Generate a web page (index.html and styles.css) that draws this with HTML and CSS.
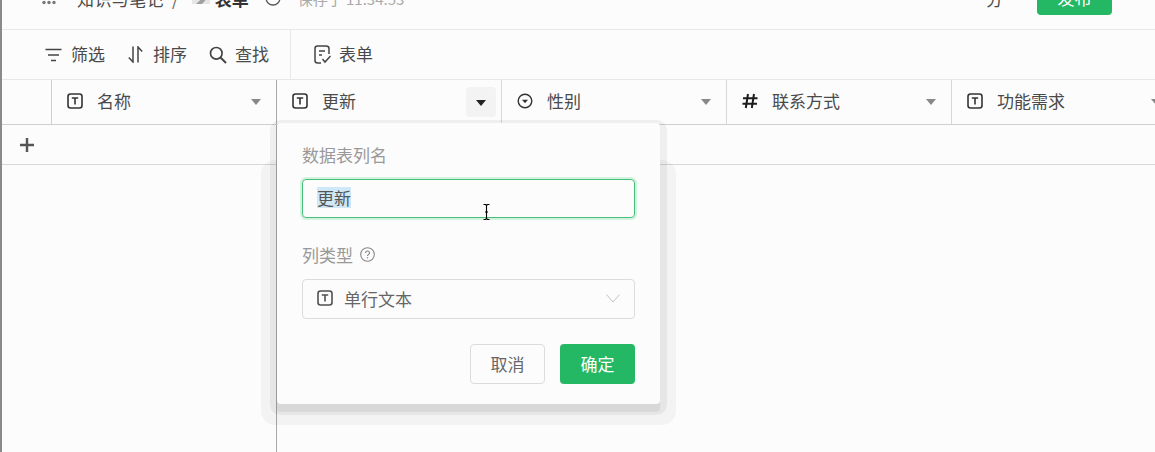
FILE: index.html
```html
<!DOCTYPE html>
<html lang="en">
<head>
    <meta charset="UTF-8">
    <meta name="viewport" content="width=device-width, initial-scale=1.0">
    <title>表单</title>
    <link rel="stylesheet" href="styles.css">
</head>
<body>
    <div class="page">
        <header class="topbar">
            <div class="topbar-row">
                <svg class="dots" width="14" height="5" viewBox="0 0 14 5"><circle cx="2" cy="2.500" r="1.700"/><circle cx="7" cy="2.500" r="1.700"/><circle cx="12" cy="2.500" r="1.700"/></svg>
                <span class="crumb">知识与笔记</span>
                <span class="crumb-sep">/</span>
                <svg class="doc-icon" width="20" height="20" viewBox="0 0 20 20"><rect x="1" y="0" width="18" height="16" fill="#e6e6e6"/><path d="M5 16 L19 3 V7 L11 16 Z" fill="#a0a0a0"/></svg>
                <strong class="doc-title">表单</strong>
                <svg class="clock-icon" width="16" height="16" viewBox="0 0 16 16"><circle cx="8" cy="8" r="7" fill="none" stroke="#555" stroke-width="1.300"/></svg>
                <span class="saved">保存于 11:34:53</span>
                <span class="share">分</span>
                <span class="publish">发布</span>
            </div>
        </header>

        <div class="toolbar">
            <div class="tool-group">
                <button class="tool tool-filter">
                    <svg width="17" height="14" viewBox="0 0 17 14"><path d="M0.500 1.500H16.500M3 7H14M6 12.500H11" fill="none" stroke="#444" stroke-width="1.500"/></svg>
                    <span>筛选</span>
                </button>
                <button class="tool tool-sort">
                    <svg width="15" height="17" viewBox="0 0 15 17"><path d="M5 0.500V16L0.800 11.500M10 16.500V1L14.200 5.500" fill="none" stroke="#444" stroke-width="1.500"/></svg>
                    <span>排序</span>
                </button>
                <button class="tool tool-find">
                    <svg width="18" height="18" viewBox="0 0 18 18"><circle cx="7.300" cy="7.300" r="5.800" fill="none" stroke="#444" stroke-width="1.700"/><path d="M11.500 11.500L17 17" stroke="#444" stroke-width="1.900"/></svg>
                    <span>查找</span>
                </button>
            </div>
            <button class="tool tool-form">
                <svg width="17" height="19" viewBox="0 0 17 19"><path d="M7 18H3.500Q1 18 1 15.500V3.500Q1 1 3.500 1H12Q15 1 15 3.500V9" fill="none" stroke="#444" stroke-width="1.500"/><path d="M5 6H11M5 10H8M8.500 14L11 17L16.500 11" fill="none" stroke="#444" stroke-width="1.500"/></svg>
                <span>表单</span>
            </button>
        </div>

        <div class="col-head">
            <div class="col-index"></div>
            <div class="col">
                <svg class="type-icon"><use href="#icon-text"/></svg>
                <span class="col-name">名称</span>
                <i class="arrow"></i>
            </div>
            <div class="col">
                <svg class="type-icon"><use href="#icon-text"/></svg>
                <span class="col-name">更新</span>
                <span class="arrow-btn"><i class="arrow arrow-dark"></i></span>
            </div>
            <div class="col">
                <svg class="type-icon" viewBox="0 0 16 16"><circle cx="8" cy="8" r="6.800" fill="none" stroke="#333" stroke-width="1.400"/><path d="M5 6.800H11L8 10.200Z" fill="#333"/></svg>
                <span class="col-name">性别</span>
                <i class="arrow"></i>
            </div>
            <div class="col">
                <svg class="type-icon" viewBox="0 0 16 16"><path d="M6 1L3.800 15M12 1L9.800 15M1 5.300H15.500M0.500 10.700H15" fill="none" stroke="#1c1c1c" stroke-width="2"/></svg>
                <span class="col-name">联系方式</span>
                <i class="arrow"></i>
            </div>
            <div class="col">
                <svg class="type-icon"><use href="#icon-text"/></svg>
                <span class="col-name">功能需求</span>
                <i class="arrow"></i>
            </div>
        </div>

        <div class="grid-body">
            <div class="frozen">
                <div class="add-row">
                    <svg width="16" height="16" viewBox="0 0 16 16"><path d="M8 1V15M1 8H15" stroke="#555" stroke-width="2.400"/></svg>
                </div>
            </div>
            <div class="rest">
                <div class="add-row"></div>
            </div>
        </div>

        <div class="popup-glow"></div>
        <div class="popup">
            <label class="field-label">数据表列名</label>
            <div class="name-input"><span class="selected">更新</span></div>
            <label class="field-label type-label">
                列类型
                <svg width="15" height="15" viewBox="0 0 15 15"><circle cx="7.500" cy="7.500" r="6.800" fill="none" stroke="#888" stroke-width="1.100"/><path d="M5.500 6Q5.500 4 7.500 4T9.500 6C9.500 7.300 7.500 7.400 7.500 9" fill="none" stroke="#888" stroke-width="1.100"/><circle cx="7.500" cy="10.800" r="0.700" fill="#888"/></svg>
            </label>
            <div class="type-select">
                <svg class="type-icon select-icon"><use href="#icon-text"/></svg>
                <span class="select-value">单行文本</span>
                <svg class="chevron" width="14" height="9" viewBox="0 0 14 9"><path d="M0.500 0.500L7 8L13.500 0.500" fill="none" stroke="#c4c4c4" stroke-width="1"/></svg>
            </div>
            <div class="popup-actions">
                <button class="btn btn-cancel">取消</button>
                <button class="btn btn-ok">确定</button>
            </div>
        </div>

        <svg class="ibeam" width="7" height="16" viewBox="0 0 7 16"><path d="M0.500 0.500H2.500L3.500 1.500L4.500 0.500H6.500M3.500 1.500V14.500M0.500 15.500H2.500L3.500 14.500L4.500 15.500H6.500M2 8H5" fill="none" stroke="#000" stroke-width="1.100"/></svg>
    </div>

    <svg width="0" height="0" class="defs">
        <symbol id="icon-text" viewBox="0 0 16 16">
            <rect x="1" y="1" width="14" height="14" rx="2.500" fill="none" stroke="#333" stroke-width="1.600"/>
            <path d="M4.800 5H11.200M8 5V11.500" fill="none" stroke="#333" stroke-width="1.600"/>
        </symbol>
    </svg>
</body>
</html>
```

FILE: styles.css
```css
/* Reset */
* {
    margin: 0;
    padding: 0;
    box-sizing: border-box;
}

html, body {
    height: 100%;
    overflow: hidden;
}

body {
    font-family: "Noto Sans CJK SC", "Liberation Sans", sans-serif;
    font-size: 17px;
    color: #4a4a4a;
    background-color: #fcfcfc;
}

button {
    font: inherit;
    background: none;
    border: none;
}

.defs {
    position: absolute;
}

.page {
    position: relative;
    display: flex;
    flex-direction: column;
    height: 452px;
    overflow: hidden;
    border-left: 2px solid #8a8a8a;
}

/* Top bar, cut off by the top of the picture */
.topbar {
    flex: 0 0 30px;
    border-bottom: 1px solid #e8e8e8;
    overflow: hidden;
}

.topbar-row {
    display: flex;
    align-items: center;
    height: 36px;
    margin-top: -20px;
    padding-left: 40px;
    white-space: nowrap;
}

.topbar-row > * {
    flex: none;
}

.dots {
    fill: #777;
    margin-top: 8px;
}

.crumb {
    margin-left: 21px;
    letter-spacing: 0.400px;
}

.crumb-sep {
    margin-left: 8px;
    color: #666;
}

.doc-icon {
    margin-left: 12px;
}

.doc-title {
    margin-left: 4px;
    color: #333;
    font-weight: 700;
}

.clock-icon {
    margin-left: 16px;
}

.saved {
    margin-left: 17px;
    color: #aaa;
    font-size: 15px;
}

.share {
    margin-left: auto;
}

.publish {
    width: 75px;
    height: 34px;
    margin-left: 34px;
    margin-right: 43px;
    border-radius: 4px;
    background-color: #25b864;
    color: #fff;
    text-align: center;
    line-height: 34px;
}

/* Toolbar */
.toolbar {
    flex: 0 0 50px;
    display: flex;
    border-bottom: 1px solid #e8e8e8;
}

.tool-group {
    display: flex;
    align-items: center;
    width: 289px;
    padding-left: 43px;
    border-right: 1px solid #e8e8e8;
}

.tool {
    display: flex;
    align-items: center;
    color: #4a4a4a;
    white-space: nowrap;
}

.tool span {
    position: relative;
    top: -1px;
}

.tool-filter svg {
    margin-right: 9px;
}

.tool-sort {
    margin-left: 23px;
}

.tool-sort svg {
    margin-right: 10px;
}

.tool-find {
    margin-left: 22px;
}

.tool-find svg {
    margin-right: 8px;
}

.tool-form {
    margin-left: 23px;
}

.tool-form svg {
    margin-right: 8px;
}

/* Column header */
.col-head {
    flex: 0 0 45px;
    display: flex;
    border-bottom: 1px solid #cfcfcf;
}

.col-index {
    flex: 0 0 50px;
    border-right: 1px solid #cfcfcf;
}

.col {
    flex: 0 0 225px;
    display: flex;
    align-items: center;
    padding: 0 15px 3px;
    border-right: 1px solid #d8d8d8;
    position: relative;
}

.col:nth-child(2) {
    border-right-color: #a8a8a8;
}

.type-icon {
    flex: none;
    width: 16px;
    height: 16px;
}

.col-name {
    margin-left: 14px;
    flex: 1;
}

.arrow {
    flex: none;
    width: 0;
    height: 0;
    border-left: 5.500px solid transparent;
    border-right: 5.500px solid transparent;
    border-top: 6px solid #888;
    margin-top: 3px;
}

.arrow-dark {
    border-top-color: #222;
    margin-top: 0;
}

.arrow-btn {
    position: absolute;
    right: 5px;
    top: 7px;
    display: flex;
    align-items: center;
    justify-content: center;
    width: 30px;
    height: 30px;
    padding-top: 2px;
    border-radius: 4px;
    background-color: #f3f3f3;
}

/* Grid body */
.grid-body {
    flex: 1;
    display: flex;
}

.frozen {
    flex: 0 0 275px;
    border-right: 1px solid #a8a8a8;
}

.rest {
    flex: 1;
}

.add-row {
    display: flex;
    align-items: center;
    height: 40px;
    padding-left: 17px;
    border-bottom: 1px solid #d8d8d8;
}

/* Column edit popup */
.popup-glow {
    position: absolute;
    left: 259px;
    top: 160px;
    width: 415px;
    height: 265px;
    border-radius: 14px;
    background-color: rgba(0, 0, 0, 0.035);
}

.popup {
    position: absolute;
    left: 275px;
    top: 123px;
    width: 383px;
    height: 281px;
    padding: 20px 25px;
    border-radius: 4px;
    background-color: #fcfcfc;
    box-shadow: 0 8px 0 0 rgba(0, 0, 0, 0.06), 0 4px 0 7px rgba(0, 0, 0, 0.05);
    display: flex;
    flex-direction: column;
}

.field-label {
    display: flex;
    align-items: center;
    height: 24px;
    padding-bottom: 2px;
    color: #999;
}

.field-label svg {
    margin-left: 7px;
}

.name-input {
    display: flex;
    align-items: center;
    height: 39px;
    margin-top: 12px;
    padding-left: 14px;
    padding-bottom: 2px;
    border: 1px solid #46bf78;
    border-radius: 4px;
    box-shadow: 0 0 0 2px #d3f1df;
    color: #555;
}

.selected {
    background-color: #cfe8f7;
    line-height: 21px;
}

.type-label {
    margin-top: 25px;
}

.type-select {
    display: flex;
    align-items: center;
    height: 40px;
    margin-top: 12px;
    padding: 0 14px 2px;
    border: 1px solid #dcdcdc;
    border-radius: 4px;
}

.select-icon {
    opacity: 0.85;
}

.select-value {
    flex: 1;
    margin-left: 11px;
    color: #666;
}

.popup-actions {
    display: flex;
    justify-content: flex-end;
    gap: 15px;
    margin-top: 25px;
}

.btn {
    width: 75px;
    height: 40px;
    padding-bottom: 2px;
    border-radius: 4px;
}

.btn-cancel {
    border: 1px solid #dcdcdc;
    color: #666;
}

.btn-ok {
    background-color: #25b864;
    color: #fff;
}

.ibeam {
    position: absolute;
    left: 481px;
    top: 204px;
}
```
